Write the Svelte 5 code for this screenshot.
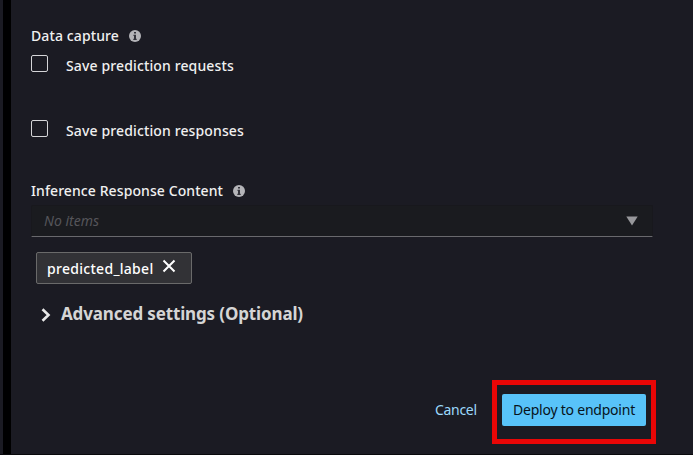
<script>
  let captures = $state([
    { label: 'Save prediction requests', checked: false },
    { label: 'Save prediction responses', checked: false },
  ]);
</script>

{#snippet info()}
  <svg class="info" width="12" height="12" viewBox="0 0 12 12" aria-hidden="true">
    <circle cx="6" cy="6" r="6" fill="#b4b4b8" />
    <path d="M5 2h2v1.600H5zM4.500 4.700H7v4h.700V10H4.300V8.700H5V6h-.500z" fill="#33333b" />
  </svg>
{/snippet}

<div class="page">
  <div class="divider"></div>
  <main>
    <div class="heading first"><span class="t-data">Data capture</span>{@render info()}</div>
    {#each captures as item}
      <label class="check">
        <input type="checkbox" bind:checked={item.checked} />
        <span>{item.label}</span>
      </label>
    {/each}
    <div class="heading second"><span class="t-inf">Inference Response Content</span>{@render info()}</div>
    <div class="select">
      <span>No items</span>
      <svg width="12" height="10" viewBox="0 0 12 10"><path d="M.3.500h11.400L6 9.500z" fill="#97979b" /></svg>
    </div>
    <div class="tag">
      <span>predicted_label</span>
      <svg width="14" height="14" viewBox="0 0 14 14"><path d="M1.500 1.500l11 11M12.500 1.500l-11 11" stroke="#fff" stroke-width="2" fill="none" /></svg>
    </div>
    <div class="advanced">
      <svg width="10" height="14" viewBox="0 0 10 14"><path d="M1.500 1.200L7.500 7l-6 5.800" stroke="#e8e8e8" stroke-width="2.600" fill="none" /></svg>
      <span>Advanced settings (Optional)</span>
    </div>
    <footer>
      <button class="cancel">Cancel</button>
      <div class="highlight"><button class="deploy">Deploy to endpoint</button></div>
    </footer>
  </main>
</div>

<style>
  .page {
    box-sizing: border-box;
    width: 693px;
    height: 455px;
    padding-left: 3px;
    display: flex;
    overflow: hidden;
    background: #1b1b23;
    border-bottom: 1px solid #09090c;
    color: #f0f0f0;
    font: 500 14px/20px "Noto Sans", "Open Sans", sans-serif;
  }
  .divider { width: 8px; height: 455px; background: #000; }
  main { flex: 1; padding-left: 20px; display: flex; flex-direction: column; }
  span, button { white-space: nowrap; }
  .heading { display: flex; align-items: center; height: 20px; gap: 10px; }
  .heading span { width: 88px; letter-spacing: 0.11px; }
  .heading .t-inf { width: 192px; letter-spacing: 0.09px; }
  .first { margin-top: 26px; }
  .second { margin-top: 5px; }
  .check { display: flex; height: 65px; gap: 18px; align-items: flex-start; }
  .check span { margin-top: 10px; letter-spacing: 0.13px; }
  input {
    appearance: none;
    box-sizing: border-box;
    width: 17px;
    height: 17px;
    margin: 9px 0 0;
    border: 1px solid #d5d5d8;
    border-radius: 2px;
  }
  .select {
    box-sizing: border-box;
    width: 622px;
    height: 32px;
    margin-top: 4px;
    padding: 0 14px 0 12px;
    display: flex;
    align-items: center;
    justify-content: space-between;
    background: #1a1b1f;
    border: 1px solid #18181d;
    border-bottom-color: #69696d;
    border-radius: 2px 2px 0 0;
    color: #55555a;
    font-size: 14px;
    font-weight: 400;
    font-style: italic;
  }
  .tag {
    box-sizing: border-box;
    width: 156px;
    height: 32px;
    margin: 15px 0 0 5px;
    padding-left: 10px;
    display: flex;
    align-items: center;
    background: #323236;
    border: 1px solid #6a6a6a;
    border-radius: 2px;
    color: #fff;
  }
  .tag span { width: 115px; padding-top: 2px; letter-spacing: 0.29px; }
  .tag svg { margin-top: -4px; }
  .advanced {
    display: flex;
    align-items: center;
    height: 24px;
    margin: 18px 0 0 10px;
    gap: 10px;
    color: #d5d5d5;
    font-size: 17px;
    font-weight: 700;
    letter-spacing: -0.14px;
  }
  .advanced svg { margin-top: 2px; }
  footer { display: flex; align-items: center; margin-top: 54px; padding-left: 404px; }
  button { border: 0; padding: 0; font: inherit; background: none; }
  .cancel { width: 57px; margin-top: -4px; text-align: left; color: #9cd9fb; font-weight: 400; letter-spacing: -0.3px; }
  .highlight {
    box-sizing: border-box;
    width: 164px;
    height: 64px;
    padding: 9px 5px;
    border: 5px solid #e90606;
  }
  .deploy { width: 144px; height: 32px; border-radius: 2px; background: #58c3f9; color: #07131b; font-weight: 400; letter-spacing: -0.22px; }
</style>
